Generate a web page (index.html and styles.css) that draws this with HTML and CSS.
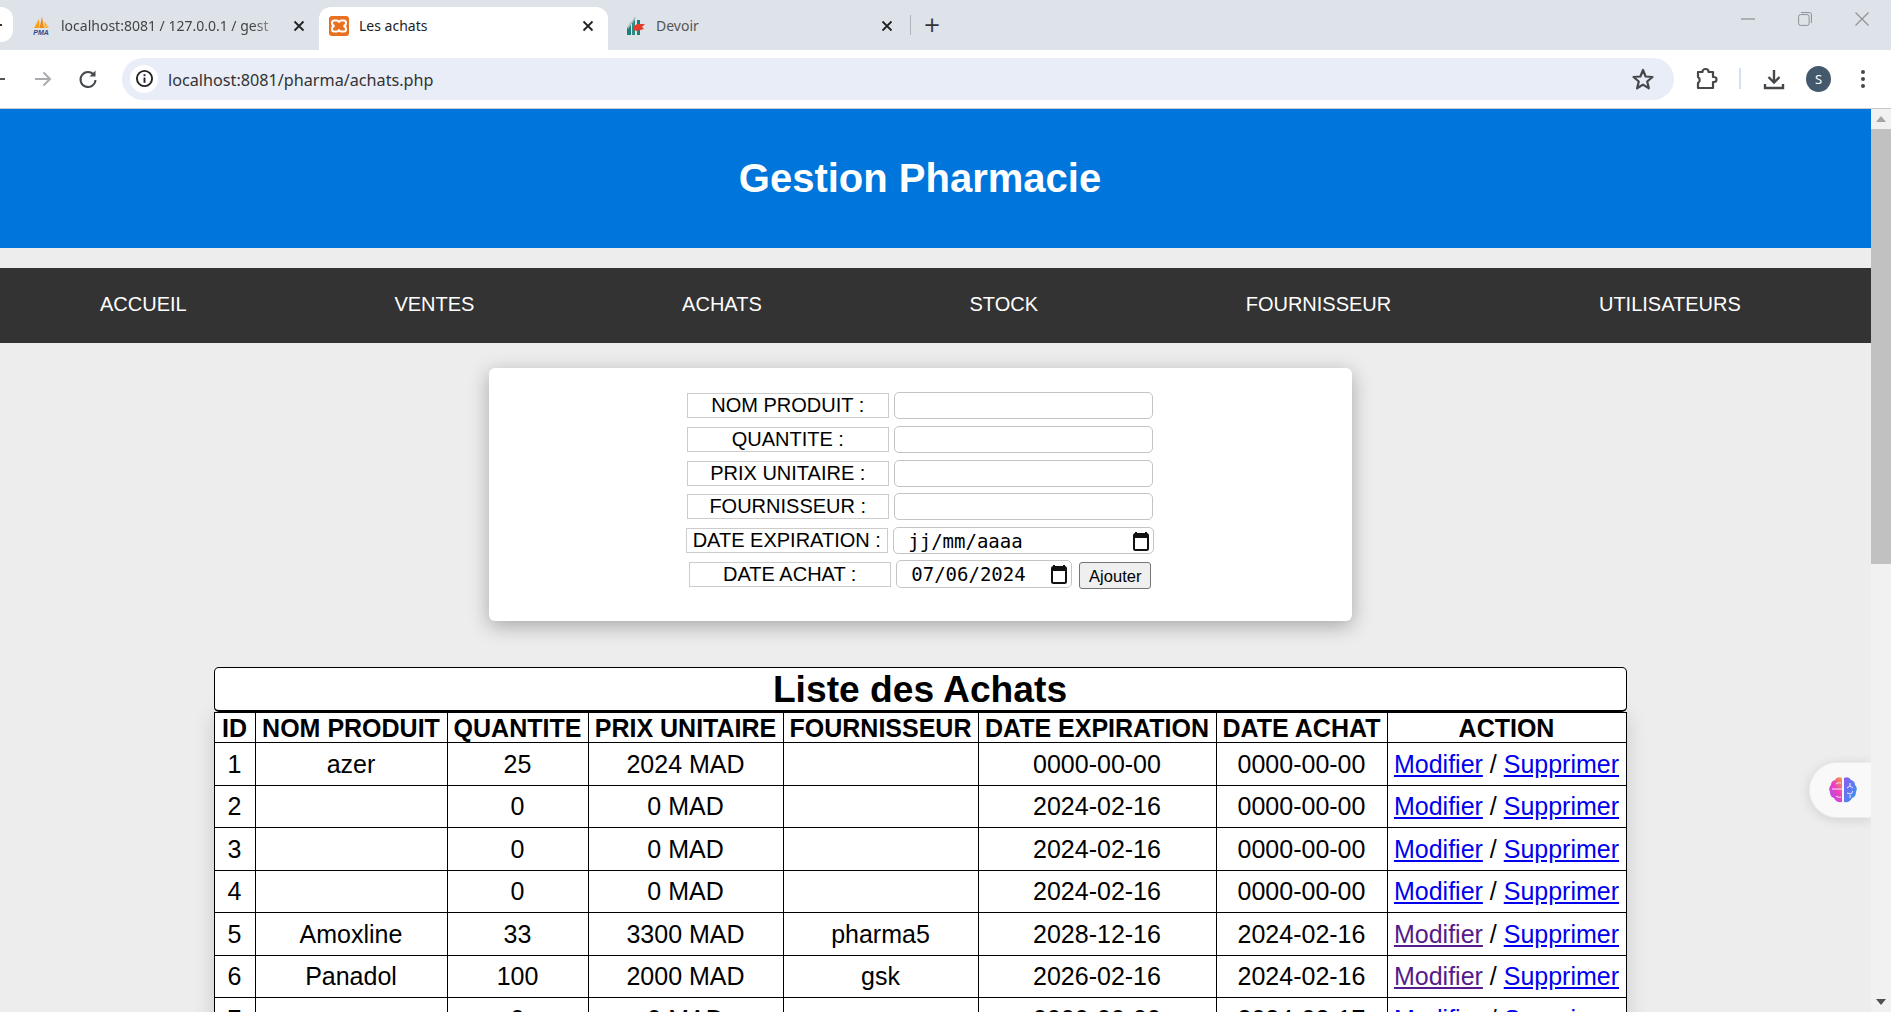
FILE: index.html
```html
<!DOCTYPE html>
<html lang="fr">
<head>
  <meta charset="UTF-8" />
  <meta name="viewport" content="width=device-width, initial-scale=1.0" />
  <title>Les achats</title>
  <link rel="stylesheet" href="styles.css">
</head>
<body>
  <div class="tabstrip">
    <div class="tab-stub"><span class="stub-dot"></span></div>
    <div class="tab tab-pma">
      <svg class="favicon" viewBox="0 0 20 20">
        <path d="M3 12 L8 3 L8.5 12Z" fill="#f6a21e"/>
        <path d="M8.5 12 L11 0.5 L13 12Z" fill="#f08a1d"/>
        <path d="M13 12 L13.5 5 L18 12Z" fill="#f9b74a"/>
        <text x="10" y="19" text-anchor="middle" class="pma-text">PMA</text>
      </svg>
      <span class="tab-title tab-fade">localhost:8081 / 127.0.0.1 / gest</span>
      <svg class="tab-close" viewBox="0 0 12 12"><path d="M1.500 1.500 L10.500 10.500 M10.500 1.500 L1.500 10.500"/></svg>
    </div>
    <div class="tab tab-active">
      <svg class="favicon" viewBox="0 0 20 20">
        <rect x="0" y="0" width="20" height="20" rx="3" fill="#e8701f"/>
        <path d="M5 4.5 H8 Q9.5 4.5 10 6.5 Q10.500 4.5 12 4.5 H15 Q17 4.500 17 7 Q17 9.500 14.500 10 Q17 10.500 17 13 Q17 15.500 15 15.500 H12 Q10.500 15.500 10 13.500 Q9.500 15.500 8 15.500 H5 Q3 15.500 3 13 Q3 10.500 5.500 10 Q3 9.500 3 7 Q3 4.500 5 4.500Z" fill="none" stroke="#fff" stroke-width="2"/>
      </svg>
      <span class="tab-title">Les achats</span>
      <svg class="tab-close" viewBox="0 0 12 12"><path d="M1.500 1.500 L10.500 10.500 M10.500 1.500 L1.500 10.500"/></svg>
    </div>
    <div class="tab tab-devoir">
      <svg class="favicon" viewBox="0 0 20 20">
        <path d="M1 19 V12 L5 6 V19Z" fill="#1f7f78"/>
        <path d="M6 19 V6 L9 1 V19Z" fill="#2c8d85"/>
        <path d="M11 19 V4 H14 V19Z" fill="#1f7f78"/>
        <path d="M1 11 L9 1 L10 2 L2 13Z" fill="#b9bdc0"/>
        <path d="M7 11 L11 8 H19 L16 11 L18 13 L11 15 L8 14Z" fill="#e53b2c"/>
      </svg>
      <span class="tab-title tab-muted">Devoir</span>
      <svg class="tab-close" viewBox="0 0 12 12"><path d="M1.500 1.500 L10.500 10.500 M10.500 1.500 L1.500 10.500"/></svg>
    </div>
    <span class="tab-sep"></span>
    <span class="tab-new">+</span>
    <div class="window-controls">
      <svg class="win-min" viewBox="0 0 14 14"><path d="M0 7 H14" stroke="#8d8f93" stroke-width="1.200"/></svg>
      <svg class="win-max" viewBox="0 0 14 14"><rect x="0.600" y="2.600" width="10.500" height="10.800" rx="2" fill="none" stroke="#8d8f93"/><path d="M3 0.600 H11.500 Q13.400 0.600 13.400 2.500 V11" fill="none" stroke="#8d8f93"/></svg>
      <svg class="win-close" viewBox="0 0 14 14"><path d="M0.500 0.500 L13.500 13.500 M13.500 0.500 L0.500 13.500" stroke="#8d8f93" stroke-width="1.100"/></svg>
    </div>
  </div>

  <div class="toolbar">
    <svg class="nav-back" viewBox="0 0 20 20"><path d="M3 10 H18" stroke="#555" stroke-width="2"/></svg>
    <svg class="nav-forward" viewBox="0 0 20 20"><path d="M2 10 H17 M10.500 3.500 L17 10 L10.500 16.500" fill="none" stroke="#a9abaf" stroke-width="2"/></svg>
    <svg class="nav-reload" viewBox="0 0 20 20"><path d="M16 6 A7.500 7.500 0 1 0 17.500 11" fill="none" stroke="#474a4d" stroke-width="2"/><path d="M17.500 1.500 V7.500 H11.500Z" fill="#474a4d"/></svg>
    <div class="address">
      <span class="info-badge">
        <svg class="info-icon" viewBox="0 0 20 20"><circle cx="10" cy="10" r="8" fill="none" stroke="#222" stroke-width="2"/><rect x="9" y="9" width="2" height="5.500" fill="#222"/><rect x="9" y="5.500" width="2" height="2" fill="#222"/></svg>
      </span>
      <span class="url">localhost:8081/pharma/achats.php</span>
      <svg class="star" viewBox="0 0 24 24"><path d="M12 3 L14.600 9.500 L21.500 10 L16.200 14.500 L17.900 21.300 L12 17.600 L6.100 21.300 L7.800 14.500 L2.500 10 L9.400 9.500Z" fill="none" stroke="#45484b" stroke-width="2.200" stroke-linejoin="round"/></svg>
    </div>
    <svg class="ext" viewBox="0 0 24 24"><path d="M4 5 H8.500 V4.500 A3 2.500 0 0 1 14.500 4.500 V5 H19 V10 H20 A2.500 2.500 0 0 1 20 15 H19 V21 H4 V16 A3.500 3.500 0 0 0 4 10Z" fill="none" stroke="#45484b" stroke-width="2.200" stroke-linejoin="round"/></svg>
    <span class="tool-sep"></span>
    <svg class="download" viewBox="0 0 24 24"><path d="M12 3 V15 M6.500 10 L12 15.500 L17.500 10" fill="none" stroke="#45484b" stroke-width="2.400"/><path d="M3 17 V21 H21 V17" fill="none" stroke="#45484b" stroke-width="2.400"/></svg>
    <span class="avatar">S</span>
    <span class="menu-dots"><i></i><i></i><i></i></span>
  </div>

  <div class="viewport">
    <div class="page">
      <header class="banner">
        <h1>Gestion Pharmacie</h1>
      </header>
      <nav class="mainnav">
        <a href="#">ACCUEIL</a>
        <a href="#">VENTES</a>
        <a href="#">ACHATS</a>
        <a href="#">STOCK</a>
        <a href="#">FOURNISSEUR</a>
        <a href="#">UTILISATEURS</a>
      </nav>

      <main class="content">
        <form class="card">
          <div class="row">
            <label class="lbl">NOM PRODUIT :</label>
            <input class="field" type="text" />
          </div>
          <div class="row">
            <label class="lbl">QUANTITE :</label>
            <input class="field" type="text" />
          </div>
          <div class="row">
            <label class="lbl">PRIX UNITAIRE :</label>
            <input class="field" type="text" />
          </div>
          <div class="row">
            <label class="lbl">FOURNISSEUR :</label>
            <input class="field" type="text" />
          </div>
          <div class="row">
            <label class="lbl">DATE EXPIRATION :</label>
            <div class="field date-field">
              <span class="date-text">jj/mm/aaaa</span>
              <svg class="cal" viewBox="0 0 16 20"><path d="M3 1 V4 M13 1 V4" stroke="#111" stroke-width="2"/><rect x="1" y="3" width="14" height="16" rx="1.500" fill="none" stroke="#111" stroke-width="2"/><rect x="1" y="3" width="14" height="4" fill="#111"/></svg>
            </div>
          </div>
          <div class="row">
            <label class="lbl">DATE ACHAT :</label>
            <div class="field date-field date-short">
              <span class="date-text">07/06/2024</span>
              <svg class="cal" viewBox="0 0 16 20"><path d="M3 1 V4 M13 1 V4" stroke="#111" stroke-width="2"/><rect x="1" y="3" width="14" height="16" rx="1.500" fill="none" stroke="#111" stroke-width="2"/><rect x="1" y="3" width="14" height="4" fill="#111"/></svg>
            </div>
            <button class="btn" type="button">Ajouter</button>
          </div>
        </form>

        <table class="list">
          <caption>Liste des Achats</caption>
          <colgroup>
            <col class="c-id"><col class="c-nom"><col class="c-qte"><col class="c-prix"><col class="c-four"><col class="c-exp"><col class="c-ach"><col class="c-act">
          </colgroup>
          <thead>
            <tr>
              <th>ID</th>
              <th>NOM PRODUIT</th>
              <th>QUANTITE</th>
              <th>PRIX UNITAIRE</th>
              <th>FOURNISSEUR</th>
              <th>DATE EXPIRATION</th>
              <th>DATE ACHAT</th>
              <th>ACTION</th>
            </tr>
          </thead>
          <tbody>
            <tr>
              <td>1</td><td>azer</td><td>25</td><td>2024 MAD</td><td></td><td>0000-00-00</td><td>0000-00-00</td>
              <td><a href="#">Modifier</a> / <a href="#">Supprimer</a></td>
            </tr>
            <tr>
              <td>2</td><td></td><td>0</td><td>0 MAD</td><td></td><td>2024-02-16</td><td>0000-00-00</td>
              <td><a href="#">Modifier</a> / <a href="#">Supprimer</a></td>
            </tr>
            <tr>
              <td>3</td><td></td><td>0</td><td>0 MAD</td><td></td><td>2024-02-16</td><td>0000-00-00</td>
              <td><a href="#">Modifier</a> / <a href="#">Supprimer</a></td>
            </tr>
            <tr>
              <td>4</td><td></td><td>0</td><td>0 MAD</td><td></td><td>2024-02-16</td><td>0000-00-00</td>
              <td><a href="#">Modifier</a> / <a href="#">Supprimer</a></td>
            </tr>
            <tr>
              <td>5</td><td>Amoxline</td><td>33</td><td>3300 MAD</td><td>pharma5</td><td>2028-12-16</td><td>2024-02-16</td>
              <td><a class="seen" href="#">Modifier</a> / <a href="#">Supprimer</a></td>
            </tr>
            <tr>
              <td>6</td><td>Panadol</td><td>100</td><td>2000 MAD</td><td>gsk</td><td>2026-02-16</td><td>2024-02-16</td>
              <td><a class="seen" href="#">Modifier</a> / <a href="#">Supprimer</a></td>
            </tr>
            <tr>
              <td>7</td><td></td><td>0</td><td>0 MAD</td><td></td><td>0000-00-00</td><td>2024-02-17</td>
              <td><a href="#">Modifier</a> / <a href="#">Supprimer</a></td>
            </tr>
          </tbody>
        </table>
      </main>

      <div class="ai-widget">
        <svg class="brain" viewBox="0 0 30 28">
          <defs>
            <linearGradient id="brainLeft" x1="1" y1="0" x2="0" y2="1"><stop offset="0" stop-color="#f7a32c"/><stop offset="0.450" stop-color="#ee3fc0"/><stop offset="1" stop-color="#a64df0"/></linearGradient>
            <linearGradient id="brainRight" x1="0" y1="0" x2="1" y2="1"><stop offset="0" stop-color="#8a5cf0"/><stop offset="1" stop-color="#2f9bf5"/></linearGradient>
          </defs>
          <path d="M14 2 Q9 0 7 4 Q3 5 3 9 Q0 12 2 16 Q2 21 6 22 Q8 27 14 26Z" fill="url(#brainLeft)"/>
          <path d="M16 2 Q21 0 23 4 Q27 5 27 9 Q30 12 28 16 Q28 21 24 22 Q22 27 16 26Z" fill="url(#brainRight)"/>
          <path d="M4 13 H14 M8 8 Q10 6 13 7 M8 20 Q10 22 13 21 M22 7 V10 L19 12 M22 10 L25 12 M19 17 L23 18 L25 15 M22 22 L22 19" fill="none" stroke="#f4e6fb" stroke-width="1"/>
        </svg>
      </div>
    </div>

    <div class="scrollbar">
      <span class="arrow-up"></span>
      <div class="track"><div class="thumb"></div></div>
      <span class="arrow-down"></span>
    </div>
  </div>
</body>
</html>
```

FILE: styles.css
```css
* {
  box-sizing: border-box;
}
html, body {
  margin: 0;
  height: 100%;
  overflow: hidden;
}
body {
  display: flex;
  flex-direction: column;
  font-family: "Liberation Sans", Arial, sans-serif;
  background-color: #fff;
}

/* browser tabs */
.tabstrip {
  display: flex;
  align-items: flex-end;
  height: 50px;
  background-color: #dee3ea;
  font-family: "Noto Sans", sans-serif;
  font-size: 14px;
  color: #222;
  flex: none;
}
.tab-stub {
  width: 13px;
  height: 35px;
  margin-bottom: 8px;
  background: #fff;
  border-radius: 0 12px 12px 0;
  position: relative;
}
.stub-dot {
  position: absolute;
  left: 0;
  top: 17px;
  width: 2px;
  height: 2px;
  background: #333;
}
.tab {
  display: flex;
  align-items: center;
  height: 43px;
  padding-bottom: 6px;
}
.tab-pma {
  width: 306px;
  padding-left: 18px;
}
.tab-active {
  width: 289px;
  padding-left: 10px;
  background: #fff;
  border-radius: 12px 12px 0 0;
}
.tab-devoir {
  width: 302px;
  padding-left: 18px;
}
.favicon {
  width: 20px;
  height: 20px;
  flex: none;
}
.pma-text {
  font-family: "Liberation Sans", sans-serif;
  font-size: 7px;
  font-weight: bold;
  font-style: italic;
  fill: #2b4a8c;
}
.tab-title {
  margin-left: 10px;
  flex: 1;
  white-space: nowrap;
  overflow: hidden;
}
.tab-fade {
  color: #444;
  -webkit-mask-image: linear-gradient(to right, #000 85%, transparent 100%);
  mask-image: linear-gradient(to right, #000 85%, transparent 100%);
}
.tab-muted {
  color: #555;
}
.tab-close {
  flex: none;
  width: 12px;
  height: 12px;
  margin: 0 14px 0 6px;
  fill: none;
  stroke: #222;
  stroke-width: 1.800;
}
.tab-devoir .tab-close {
  margin-right: 17px;
}
.tab-sep {
  width: 1px;
  height: 20px;
  margin-bottom: 15px;
  background: #b0b4ba;
}
.tab-new {
  width: 42px;
  height: 43px;
  padding-bottom: 4px;
  font-family: "DejaVu Sans", sans-serif;
  font-size: 21px;
  line-height: 36px;
  text-align: center;
  color: #333;
}
.window-controls {
  margin-left: auto;
  align-self: stretch;
  display: flex;
  align-items: center;
  gap: 43px;
  padding: 0 22px 12px 0;
}
.window-controls svg {
  width: 14px;
  height: 14px;
}

/* address bar */
.toolbar {
  display: flex;
  align-items: center;
  height: 59px;
  flex: none;
  background: #fff;
  border-bottom: 1px solid #c6c8cc;
  padding-bottom: 1px;
}
.toolbar svg {
  flex: none;
}
.nav-back {
  width: 20px;
  height: 20px;
  margin-left: -13px;
}
.nav-forward {
  width: 20px;
  height: 20px;
  margin-left: 26px;
}
.nav-reload {
  width: 20px;
  height: 20px;
  margin-left: 25px;
}
.address {
  display: flex;
  align-items: center;
  width: 1552px;
  height: 42px;
  margin-left: 24px;
  padding: 0 19px 0 8px;
  background-color: #e9edf7;
  border-radius: 21px;
}
.info-badge {
  display: flex;
  align-items: center;
  justify-content: center;
  width: 28px;
  height: 28px;
  background: #fff;
  border-radius: 50%;
}
.info-icon {
  width: 19px;
  height: 19px;
}
.url {
  margin: 2px 0 0 10px;
  font-family: "Noto Sans", sans-serif;
  font-size: 16.2px;
  color: #333;
}
.star {
  width: 24px;
  height: 24px;
  margin-left: auto;
}
.ext {
  width: 24px;
  height: 24px;
  margin-left: 20px;
}
.tool-sep {
  width: 2px;
  height: 21px;
  margin-left: 21px;
  background: #d3e1f5;
}
.download {
  width: 24px;
  height: 24px;
  margin-left: 21px;
}
.avatar {
  width: 25px;
  height: 26px;
  margin-left: 20px;
  border-radius: 50%;
  background: #44596b;
  color: #fff;
  font-family: "Noto Sans", sans-serif;
  font-size: 13px;
  line-height: 26px;
  text-align: center;
}
.menu-dots {
  display: flex;
  flex-direction: column;
  gap: 3px;
  margin-left: 30px;
}
.menu-dots i {
  display: block;
  width: 4px;
  height: 4px;
  border-radius: 50%;
  background: #45484b;
}

/* page area */
.viewport {
  flex: 1;
  display: flex;
  min-height: 0;
}
.page {
  position: relative;
  flex: 1;
  min-width: 0;
  overflow: hidden;
  background-color: #ededed;
}
.banner {
  height: 139px;
  padding-right: 31px;
  background-color: #0075db;
  display: flex;
  align-items: center;
  justify-content: center;
}
.banner h1 {
  margin: 0;
  font-size: 40px;
  color: #fff;
}
.mainnav {
  display: flex;
  gap: 207.7px;
  align-items: center;
  height: 75px;
  margin-top: 20px;
  padding: 0 0 2px 100px;
  background-color: #333;
}
.mainnav a {
  color: #fff;
  font-size: 20px;
  text-decoration: none;
  white-space: nowrap;
}

.content {
  padding-right: 31px;
}
.card {
  width: 863px;
  height: 253px;
  margin: 25px auto 46px;
  padding-top: 21px;
  background: #fff;
  border-radius: 6px;
  box-shadow: 0 5px 20px rgba(0,0,0,0.3);
}
.row {
  display: flex;
  justify-content: center;
  align-items: center;
  gap: 5.5px;
  height: 33.7px;
}
.lbl {
  width: 202px;
  height: 25px;
  border: 1px solid #ccc;
  font-size: 20px;
  line-height: 23px;
  text-align: center;
}
.field {
  width: 259px;
  height: 27px;
  padding: 0 12px;
  background: #fff;
  border: 1px solid #c4c4c4;
  border-radius: 5px;
  font-size: 16px;
}
.date-field {
  display: flex;
  align-items: center;
  justify-content: space-between;
  width: 261px;
  padding: 0 4px 0 14px;
}
.date-short {
  width: 176px;
  height: 28px;
}
.date-text {
  font-family: "DejaVu Sans Mono", monospace;
  font-size: 19px;
  color: #000;
}
.cal {
  width: 16px;
  height: 20px;
}
.btn {
  width: 72px;
  height: 27px;
  margin-top: 3px;
  margin-left: 1.5px;
  padding: 0;
  font-family: "Liberation Sans", Arial, sans-serif;
  font-size: 16.5px;
  line-height: 27px;
  color: #000;
  background-color: #efefef;
  border: 1px solid #767676;
  border-radius: 3px;
}

/* list */
.list {
  width: 1412px;
  margin: 0 auto;
  table-layout: fixed;
  border-collapse: collapse;
  background: #fff;
  box-shadow: 0 4px 20px rgba(0,0,0,0.15);
}
.list caption {
  height: 45px;
  background: #fff;
  border: 1px solid #000;
  border-bottom-width: 2px;
  border-radius: 5px;
  font-size: 37.2px;
  font-weight: bold;
  line-height: 42px;
}
.c-id { width: 41px; }
.c-nom { width: 192px; }
.c-qte { width: 141px; }
.c-prix { width: 195px; }
.c-four { width: 195px; }
.c-exp { width: 238px; }
.c-ach { width: 171px; }
.c-act { width: 239px; }
.list th, .list td {
  padding: 0;
  border: 1px solid #000;
  text-align: center;
  white-space: nowrap;
  overflow: hidden;
}
.list th {
  height: 30px;
  font-size: 25px;
  line-height: 26px;
}
.list td {
  height: 42.5px;
  padding-top: 1px;
  font-size: 25px;
}
.list a {
  color: #0000ee;
}
.list a.seen {
  color: #551a8b;
}

.ai-widget {
  position: absolute;
  right: 0;
  top: 653px;
  display: flex;
  align-items: center;
  width: 62px;
  height: 56px;
  padding-left: 18px;
  background: #f9f9f9;
  border: 1px solid #ececec;
  border-right: none;
  border-radius: 28px 0 0 28px;
  box-shadow: 0 2px 12px rgba(0,0,0,0.12);
}
.brain {
  width: 30px;
  height: 28px;
}

/* page scrollbar */
.scrollbar {
  display: flex;
  flex-direction: column;
  align-items: center;
  width: 20px;
  flex: none;
  background-color: #f1f1f1;
}
.arrow-up, .arrow-down {
  flex: none;
  width: 0;
  height: 0;
  margin: 7px 0;
  border-left: 5px solid transparent;
  border-right: 5px solid transparent;
}
.arrow-up {
  border-bottom: 6px solid #a3a3a3;
}
.arrow-down {
  border-top: 6px solid #505050;
}
.track {
  flex: 1;
  width: 100%;
}
.thumb {
  width: 100%;
  height: 435px;
  background-color: #c1c1c1;
}
```
